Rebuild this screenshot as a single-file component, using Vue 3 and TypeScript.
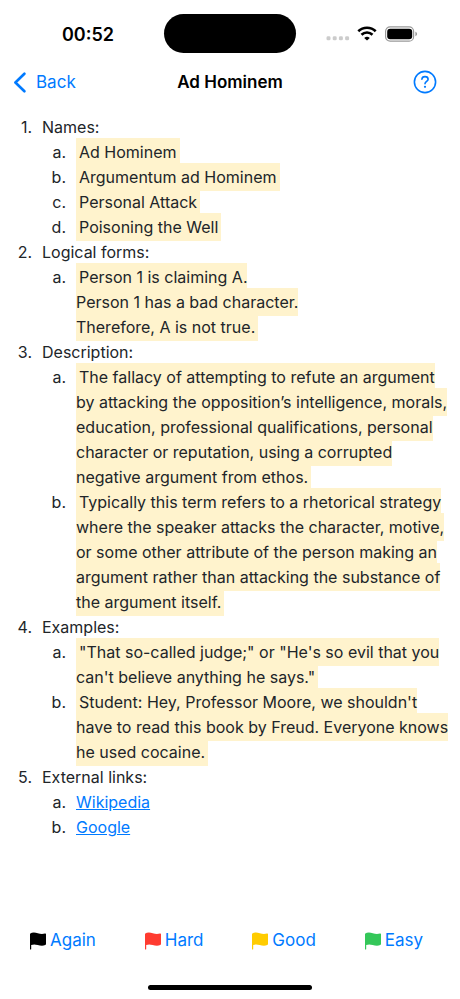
<script setup lang="ts">
interface Section {
  title: string
  items: string[][]
}

interface Grade {
  label: string
  tone: string
}

const sections: Section[] = [
  {
    title: 'Names:',
    items: [['Ad Hominem'], ['Argumentum ad Hominem'], ['Personal Attack'], ['Poisoning the Well']],
  },
  {
    title: 'Logical forms:',
    items: [['Person 1 is claiming A.', 'Person 1 has a bad character.', 'Therefore, A is not true.']],
  },
  {
    title: 'Description:',
    items: [
      [
        'The fallacy of attempting to refute an argument by attacking the opposition’s intelligence, morals, education, professional qualifications, personal character or reputation, using a corrupted negative argument from ethos.',
      ],
      [
        'Typically this term refers to a rhetorical strategy where the speaker attacks the character, motive, or some other attribute of the person making an argument rather than attacking the substance of the argument itself.',
      ],
    ],
  },
  {
    title: 'Examples:',
    items: [
      ['"That so-called judge;" or "He\'s so evil that you can\'t believe anything he says."'],
      [
        "Student: Hey, Professor Moore, we shouldn't have to read this book by Freud. Everyone knows he used cocaine.",
      ],
    ],
  },
]

const links = [
  { label: 'Wikipedia', href: '#wikipedia' },
  { label: 'Google', href: '#google' },
]

const grades: Grade[] = [
  { label: 'Again', tone: 'black' },
  { label: 'Hard', tone: 'red' },
  { label: 'Good', tone: 'yellow' },
  { label: 'Easy', tone: 'green' },
]

const letter = (index: number): string => String.fromCharCode(97 + index) + '.'
</script>

<template>
  <div class="screen">
    <div class="status">
      <div class="clock">00:52</div>
      <div class="island"></div>
      <div class="indicators">
        <svg class="cellular" width="24" height="5" viewBox="0 0 24 5" aria-hidden="true">
          <rect x="0.5" y="0.3" width="4" height="4" rx="1.4" />
          <rect x="6.7" y="0.3" width="4" height="4" rx="1.4" />
          <rect x="12.9" y="0.3" width="4" height="4" rx="1.4" />
          <rect x="19.1" y="0.3" width="4" height="4" rx="1.4" />
        </svg>
        <svg class="wifi" width="20" height="15" viewBox="0 0 20 15" aria-hidden="true">
          <path d="M1.3 5.3 A12.4 12.4 0 0 1 18.7 5.3" />
          <path d="M4.5 8.7 A7.9 7.9 0 0 1 15.5 8.7" />
          <path class="wifi-dot" d="M10 14.6 L7.2 11.9 A4.2 4.2 0 0 1 12.8 11.9 Z" />
        </svg>
        <svg class="battery" width="33" height="16" viewBox="0 0 33 16" aria-hidden="true">
          <rect class="shell" x="0.6" y="0.8" width="28" height="14.4" rx="4.5" />
          <rect x="2.2" y="2.7" width="25" height="10.6" rx="3" />
          <path class="cap" d="M30.4 5.8 C32.6 6.5 32.6 9.5 30.4 10.2 Z" />
        </svg>
      </div>
    </div>

    <header class="nav">
      <button class="back" type="button">
        <svg width="13" height="21" viewBox="0 0 13 21" aria-hidden="true">
          <path d="M11.4 1.7 L2.4 10.5 L11.4 19.3" />
        </svg>
        <span>Back</span>
      </button>
      <h1>Ad Hominem</h1>
      <button class="help" type="button" aria-label="Help">
        <svg width="24" height="24" viewBox="0 0 24 24" aria-hidden="true">
          <circle cx="12" cy="12" r="10.6" />
          <path d="M8.9 9.3 C9 7.5 10.3 6.6 12 6.6 C13.8 6.6 15.1 7.6 15.1 9.2 C15.1 11.3 12 11.5 12 13.8" />
          <circle class="point" cx="12" cy="16.8" r="1.1" />
        </svg>
      </button>
    </header>

    <main>
      <ol class="outline">
        <li v-for="(section, s) in sections" :key="section.title">
          <span class="number">{{ s + 1 }}.</span>
          <span>{{ section.title }}</span>
          <ol class="answers">
            <li v-for="(lines, i) in section.items" :key="i">
              <span class="number">{{ letter(i) }}</span>
              <div class="answer">
                <mark><template v-for="(line, l) in lines" :key="l"><br v-if="l > 0">{{ line }}</template></mark>
              </div>
            </li>
          </ol>
        </li>
        <li>
          <span class="number">5.</span>
          <span>External links:</span>
          <ol class="answers">
            <li v-for="(link, i) in links" :key="link.label">
              <span class="number">{{ letter(i) }}</span>
              <div class="answer"><a :href="link.href">{{ link.label }}</a></div>
            </li>
          </ol>
        </li>
      </ol>
    </main>

    <footer>
      <div class="grades">
        <button v-for="grade in grades" :key="grade.label" type="button">
          <svg :class="grade.tone" width="16" height="18" viewBox="0 0 16 18" aria-hidden="true">
            <path
              d="M0 1.7 C2.2 0.2 5 0.4 7.8 1.3 C10.6 2.2 13 2.2 15 1.5 Q16 1.2 16 2.2 V12 Q16 12.7 15.3 13 C12.8 14 10.3 13.7 7.7 12.9 C5.2 12.2 3.2 12.2 1.2 12.9 V17 Q1.2 17.6 0.6 17.6 Q0 17.6 0 17 Z"
            />
          </svg>
          <span>{{ grade.label }}</span>
        </button>
      </div>
      <div class="home"></div>
    </footer>
  </div>
</template>

<style>
body {
  margin: 0;
  background: #fff;
}
</style>

<style scoped>
.screen {
  display: flex;
  flex-direction: column;
  min-height: 100vh;
  box-sizing: border-box;
  font-family: Inter, 'Liberation Sans', sans-serif;
  font-size: 16px;
  line-height: 25px;
  color: #212529;
}

button {
  display: flex;
  align-items: center;
  padding: 0;
  border: 0;
  background: none;
  font: inherit;
  color: #007aff;
}

.status {
  display: grid;
  grid-template-columns: 1fr 132px 1fr;
  align-items: center;
  padding-top: 14px;
}

.clock {
  padding: 2px 12px 0 24px;
  text-align: center;
  font-size: 18px;
  font-weight: 600;
  color: #000;
}

.island {
  height: 39px;
  border-radius: 20px;
  background: #000;
}

.indicators {
  display: flex;
  align-items: center;
  padding-left: 30px;
}

.cellular {
  margin-top: 10px;
  fill: #ccc;
}

.wifi {
  margin-left: 7px;
  fill: none;
  stroke: #000;
  stroke-width: 2.6;
}

.wifi-dot {
  fill: #000;
  stroke: none;
}

.battery {
  margin-left: 8px;
}

.shell {
  fill: none;
  stroke: #999;
  stroke-width: 1.2;
}

.cap {
  fill: #999;
}

.nav {
  display: grid;
  grid-template-columns: 1fr auto 1fr;
  align-items: center;
  height: 58px;
  padding: 0 23px 0 13px;
}

.back {
  gap: 10px;
  font-size: 17px;
}

.back path {
  fill: none;
  stroke: #007aff;
  stroke-width: 2.6;
  stroke-linecap: round;
  stroke-linejoin: round;
}

h1 {
  margin: 0;
  padding-left: 10px;
  font-size: 17px;
  font-weight: 600;
  color: #000;
}

.help {
  justify-self: end;
}

.help svg {
  fill: none;
  stroke: #007aff;
  stroke-width: 1.6;
  stroke-linecap: round;
}

.help .point {
  fill: #007aff;
  stroke: none;
}

main {
  flex: 1;
  padding: 4px 8px 0 0;
}

ol {
  margin: 0;
  padding: 0;
  list-style: none;
}

.outline > li {
  display: grid;
  grid-template-columns: 32px 1fr;
  column-gap: 10px;
}

.answers {
  grid-column: 1 / -1;
}

.answers > li {
  display: grid;
  grid-template-columns: 66px 1fr;
  column-gap: 10px;
}

.number {
  text-align: right;
}

mark {
  padding: 4px 3px;
  background: #fff3cd;
  color: inherit;
}

a {
  color: #007aff;
}

.grades {
  display: grid;
  grid-template-columns: repeat(4, auto);
  justify-content: space-between;
  padding: 0 37px 0 30px;
}

.grades button {
  gap: 4px;
  font-size: 17px;
}

.black {
  fill: #000;
}

.red {
  fill: #ff3b30;
}

.yellow {
  fill: #ffcc00;
}

.green {
  fill: #34c759;
}

.home {
  width: 164px;
  height: 5px;
  margin: 32px auto 9px;
  border-radius: 3px;
  background: #000;
}
</style>
